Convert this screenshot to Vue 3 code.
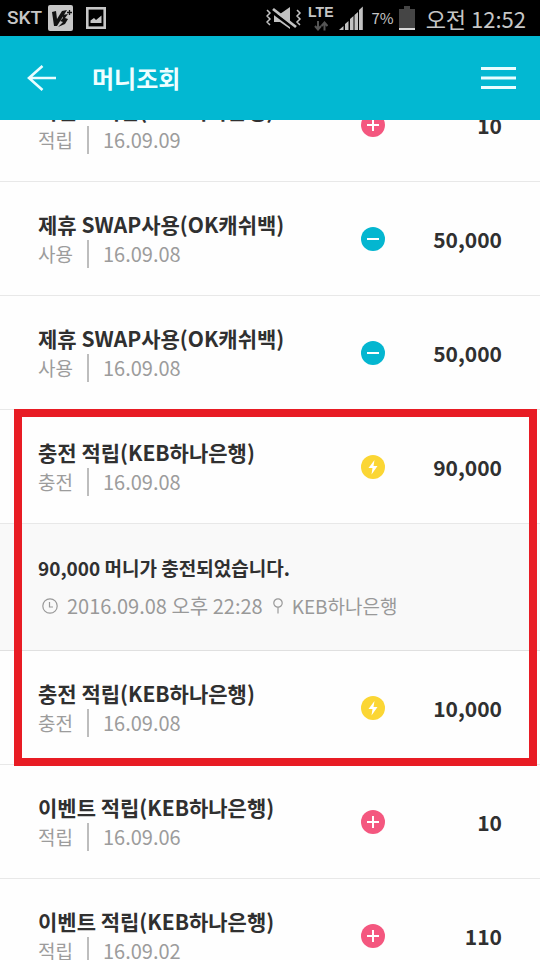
<script setup>
const before = [
  { title: '이벤트 적립(KEB하나은행)', type: '적립', date: '16.09.09', kind: 'plus', amount: '10' },
  { title: '제휴 SWAP사용(OK캐쉬백)', type: '사용', date: '16.09.08', kind: 'minus', amount: '50,000' },
  { title: '제휴 SWAP사용(OK캐쉬백)', type: '사용', date: '16.09.08', kind: 'minus', amount: '50,000' },
]
const charges = [
  {
    title: '충전 적립(KEB하나은행)', type: '충전', date: '16.09.08', kind: 'charge', amount: '90,000',
    detail: { message: '90,000 머니가 충전되었습니다.', time: '2016.09.08 오후 22:28', place: 'KEB하나은행' },
  },
  { title: '충전 적립(KEB하나은행)', type: '충전', date: '16.09.08', kind: 'charge', amount: '10,000' },
]
const after = [
  { title: '이벤트 적립(KEB하나은행)', type: '적립', date: '16.09.06', kind: 'plus', amount: '10' },
  { title: '이벤트 적립(KEB하나은행)', type: '적립', date: '16.09.02', kind: 'plus', amount: '110' },
]
const groups = [
  { items: before, marked: false },
  { items: charges, marked: true },
  { items: after, marked: false },
]
</script>

<template>
  <div class="screen">
    <div class="status">
      <div class="status-side left">
        <span class="carrier">SKT</span>
        <svg class="app-badge" viewBox="0 0 25 26" aria-hidden="true">
          <rect width="25" height="26" rx="2" fill="#c6c6c6" />
          <path d="M4 7 L8 6 L9 14 L14 6 L19 5 L9 21 L6 21 Z" fill="#111" />
          <path d="M14 10 L20 9 L17 13 L20 14 L17 19 L10 22 L15 17 L12 16 L15 13 Z" fill="#111" />
          <path d="M21.500 5 V10 M19 7.500 H24" stroke="#111" stroke-width="1.300" />
        </svg>
        <svg class="picture" viewBox="0 0 20 22" aria-hidden="true">
          <rect x="1.300" y="1.300" width="17.400" height="19.400" fill="none" stroke="#c6c6c6" stroke-width="2.600" />
          <path d="M4.500 16 V13.500 L8 11 L10 13 L15.500 8.500 V16 Z" fill="#c6c6c6" />
        </svg>
      </div>
      <div class="status-side right">
        <svg class="mute" viewBox="0 0 36 24" aria-hidden="true">
          <path d="M8 8 H14 L24 1 V23 L14 16 H8 Z" fill="#c2c2c2" />
          <path d="M5 5 L29 23" stroke="#000" stroke-width="3" />
          <path d="M7 3 L30 21" stroke="#c2c2c2" stroke-width="2.800" />
          <path d="M1 4 L4 7 L1 10 L4 13 L1 16 L4 19 M31 4 L34 7 L31 10 L34 13 L31 16 L34 19" fill="none" stroke="#c2c2c2" stroke-width="1.500" />
        </svg>
        <span class="network">
          <span class="lte">LTE</span>
          <svg class="traffic" viewBox="0 0 14 10" aria-hidden="true">
            <path d="M4 0 V8 M1 5 L4 8.500 L7 5 M10.500 9.500 V2 M7.500 5 L10.500 1.500 L13.500 5" fill="none" stroke="#555" stroke-width="2" />
          </svg>
        </span>
        <svg class="signal" viewBox="0 0 24 24" aria-hidden="true">
          <path d="M0 24 L4.500 20 V24 Z M6 24 V18 L9.500 15 V24 Z M11 24 V13 L14.500 10 V24 Z M15.500 24 V9 L19 6 V24 Z M20 24 V4 L23.800 0.500 V24 Z" fill="#c2c2c2" />
        </svg>
        <span class="percent">7%</span>
        <svg class="battery" viewBox="0 0 16 24" aria-hidden="true">
          <path d="M5 0 H11 V3 H16 V22 H0 V3 H5 Z" fill="#454545" />
          <rect y="22" width="16" height="2" fill="#d8d8d8" />
        </svg>
        <span class="clock">오전 12:52</span>
      </div>
    </div>

    <header class="bar">
      <button class="icon-button" type="button" aria-label="뒤로">
        <svg class="back" viewBox="0 0 30 28" aria-hidden="true">
          <path d="M15.500 2 L2 14 L15.500 26 M2 14 H29" fill="none" stroke="#e9fdff" stroke-width="2.600" />
        </svg>
      </button>
      <h1>머니조회</h1>
      <button class="icon-button" type="button" aria-label="메뉴">
        <svg class="menu" viewBox="0 0 35 24" aria-hidden="true">
          <path d="M0 2.500 H35 M0 12 H35 M0 21.500 H35" stroke="#e9fdff" stroke-width="3" />
        </svg>
      </button>
    </header>

    <main class="history">
      <div class="scrolled">
        <ul v-for="(group, g) in groups" :key="g" class="group" :class="{ marked: group.marked }">
          <li v-for="(item, i) in group.items" :key="i">
            <div class="row">
              <div class="info">
                <p class="title">{{ item.title }}</p>
                <p class="meta">
                  <span class="type">{{ item.type }}</span>
                  <span class="date">{{ item.date }}</span>
                </p>
              </div>
              <svg class="kind" :class="item.kind" viewBox="0 0 24 24" aria-hidden="true">
                <circle cx="12" cy="12" r="12" />
                <path v-if="item.kind === 'plus'" d="M6 12 H18 M12 6 V18" class="line" />
                <path v-else-if="item.kind === 'minus'" d="M6 12 H18" class="line" />
                <path v-else d="M13.500 5 L7.500 13 H11.500 L10.500 19.500 L16.500 11 H12.500 Z" fill="#fff" />
              </svg>
              <span class="amount">{{ item.amount }}</span>
            </div>
            <div v-if="item.detail" class="detail">
              <p class="message">{{ item.detail.message }}</p>
              <p class="where">
                <svg class="time-icon" viewBox="0 0 16 16" aria-hidden="true">
                  <circle cx="8" cy="8" r="7.200" />
                  <path d="M7.500 4 V9 H11" />
                </svg>
                <span class="time">{{ item.detail.time }}</span>
                <svg class="pin-icon" viewBox="0 0 10 16" aria-hidden="true">
                  <circle cx="5" cy="5" r="4.200" />
                  <path d="M5 9.200 V15.500" />
                </svg>
                <span class="place">{{ item.detail.place }}</span>
              </p>
            </div>
          </li>
        </ul>
      </div>
    </main>
  </div>
</template>

<style>
body {
  background: #fefefe;
}
</style>

<style scoped>
.screen {
  display: flex;
  flex-direction: column;
  height: 100vh;
  overflow: hidden;
  background: #fefefe;
  color: #303030;
  font-family: "Noto Sans CJK KR", sans-serif;
}
p, h1, ul {
  margin: 0;
  padding: 0;
}
svg {
  display: block;
  flex: none;
}
.status {
  flex: none;
  display: flex;
  justify-content: space-between;
  height: 36px;
  padding: 0 14px 0 7px;
  background: #000;
  color: #c6c6c6;
}
.status-side {
  display: flex;
  align-items: center;
}
.carrier {
  margin-right: 6px;
  font: 500 19px/24px Roboto, sans-serif;
}
.app-badge {
  width: 25px;
  height: 26px;
  margin-right: 13px;
}
.picture {
  width: 20px;
  height: 22px;
}
.mute {
  width: 36px;
  height: 24px;
  margin-right: 6px;
}
.network {
  display: flex;
  flex-direction: column;
  align-items: center;
  gap: 2px;
  margin-right: 6px;
}
.lte {
  font: 700 14px/14px "Liberation Sans", sans-serif;
}
.traffic {
  width: 14px;
  height: 10px;
}
.signal {
  width: 24px;
  height: 24px;
  margin-right: 8px;
}
.percent {
  margin-right: 5px;
  font-size: 15px;
  line-height: 24px;
}
.battery {
  width: 16px;
  height: 24px;
  margin-right: 11px;
}
.clock {
  font-size: 22px;
  line-height: 32px;
}
.bar {
  flex: none;
  display: flex;
  align-items: center;
  height: 84px;
  padding: 0 24px 0 27px;
  background: #02b8d2;
}
.icon-button {
  padding: 0;
  border: 0;
  background: none;
  cursor: pointer;
}
.back {
  width: 30px;
  height: 28px;
}
.menu {
  width: 35px;
  height: 24px;
}
h1 {
  flex: 1;
  padding-left: 35px;
  color: #effeff;
  font-size: 24px;
  font-weight: 700;
  line-height: 32px;
}
.history {
  flex: 1;
  min-height: 0;
  overflow: hidden;
}
.scrolled {
  margin-top: -52px;
}
.group {
  position: relative;
  list-style: none;
}
.marked::after {
  content: "";
  position: absolute;
  inset: -1px 3px -1px 14px;
  border: 8px solid #e81c24;
  pointer-events: none;
}
.row {
  display: grid;
  grid-template-columns: 1fr 24px 117px;
  align-items: center;
  box-sizing: border-box;
  height: 114px;
  padding: 0 38px;
  border-bottom: 1px solid #e8e8e8;
}
.info {
  display: flex;
  flex-direction: column;
  gap: 2px;
  white-space: nowrap;
}
.title {
  font-size: 21px;
  font-weight: 700;
  line-height: 28px;
}
.meta {
  display: flex;
  color: #9c9c9c;
  line-height: 28px;
}
.type {
  box-sizing: border-box;
  min-width: 49px;
  font-size: 19px;
}
.date {
  padding-left: 14px;
  border-left: 2px solid #bdbdbd;
  font-size: 20px;
}
.kind {
  width: 24px;
  height: 24px;
}
.plus {
  fill: #f4577f;
}
.minus {
  fill: #04b6d0;
}
.charge {
  fill: #fbd634;
}
.line {
  stroke: #fff;
  stroke-width: 2;
}
.amount {
  font-size: 21px;
  font-weight: 700;
  line-height: 28px;
  text-align: right;
}
.detail {
  display: flex;
  flex-direction: column;
  gap: 10px;
  padding: 30px 38px;
  border-bottom: 1px solid #e0e0e0;
  background: #f9f9f9;
}
.message {
  font-size: 19px;
  font-weight: 700;
  line-height: 28px;
}
.where {
  display: flex;
  align-items: center;
  padding-left: 4px;
  color: #999;
  line-height: 28px;
}
.time-icon, .pin-icon {
  height: 16px;
  fill: none;
  stroke: #999;
  stroke-width: 1.2;
}
.time-icon {
  width: 16px;
}
.time {
  margin: 0 10px 0 9px;
  font-size: 20px;
}
.pin-icon {
  width: 10px;
}
.place {
  margin-left: 9px;
  font-size: 19px;
}
</style>
